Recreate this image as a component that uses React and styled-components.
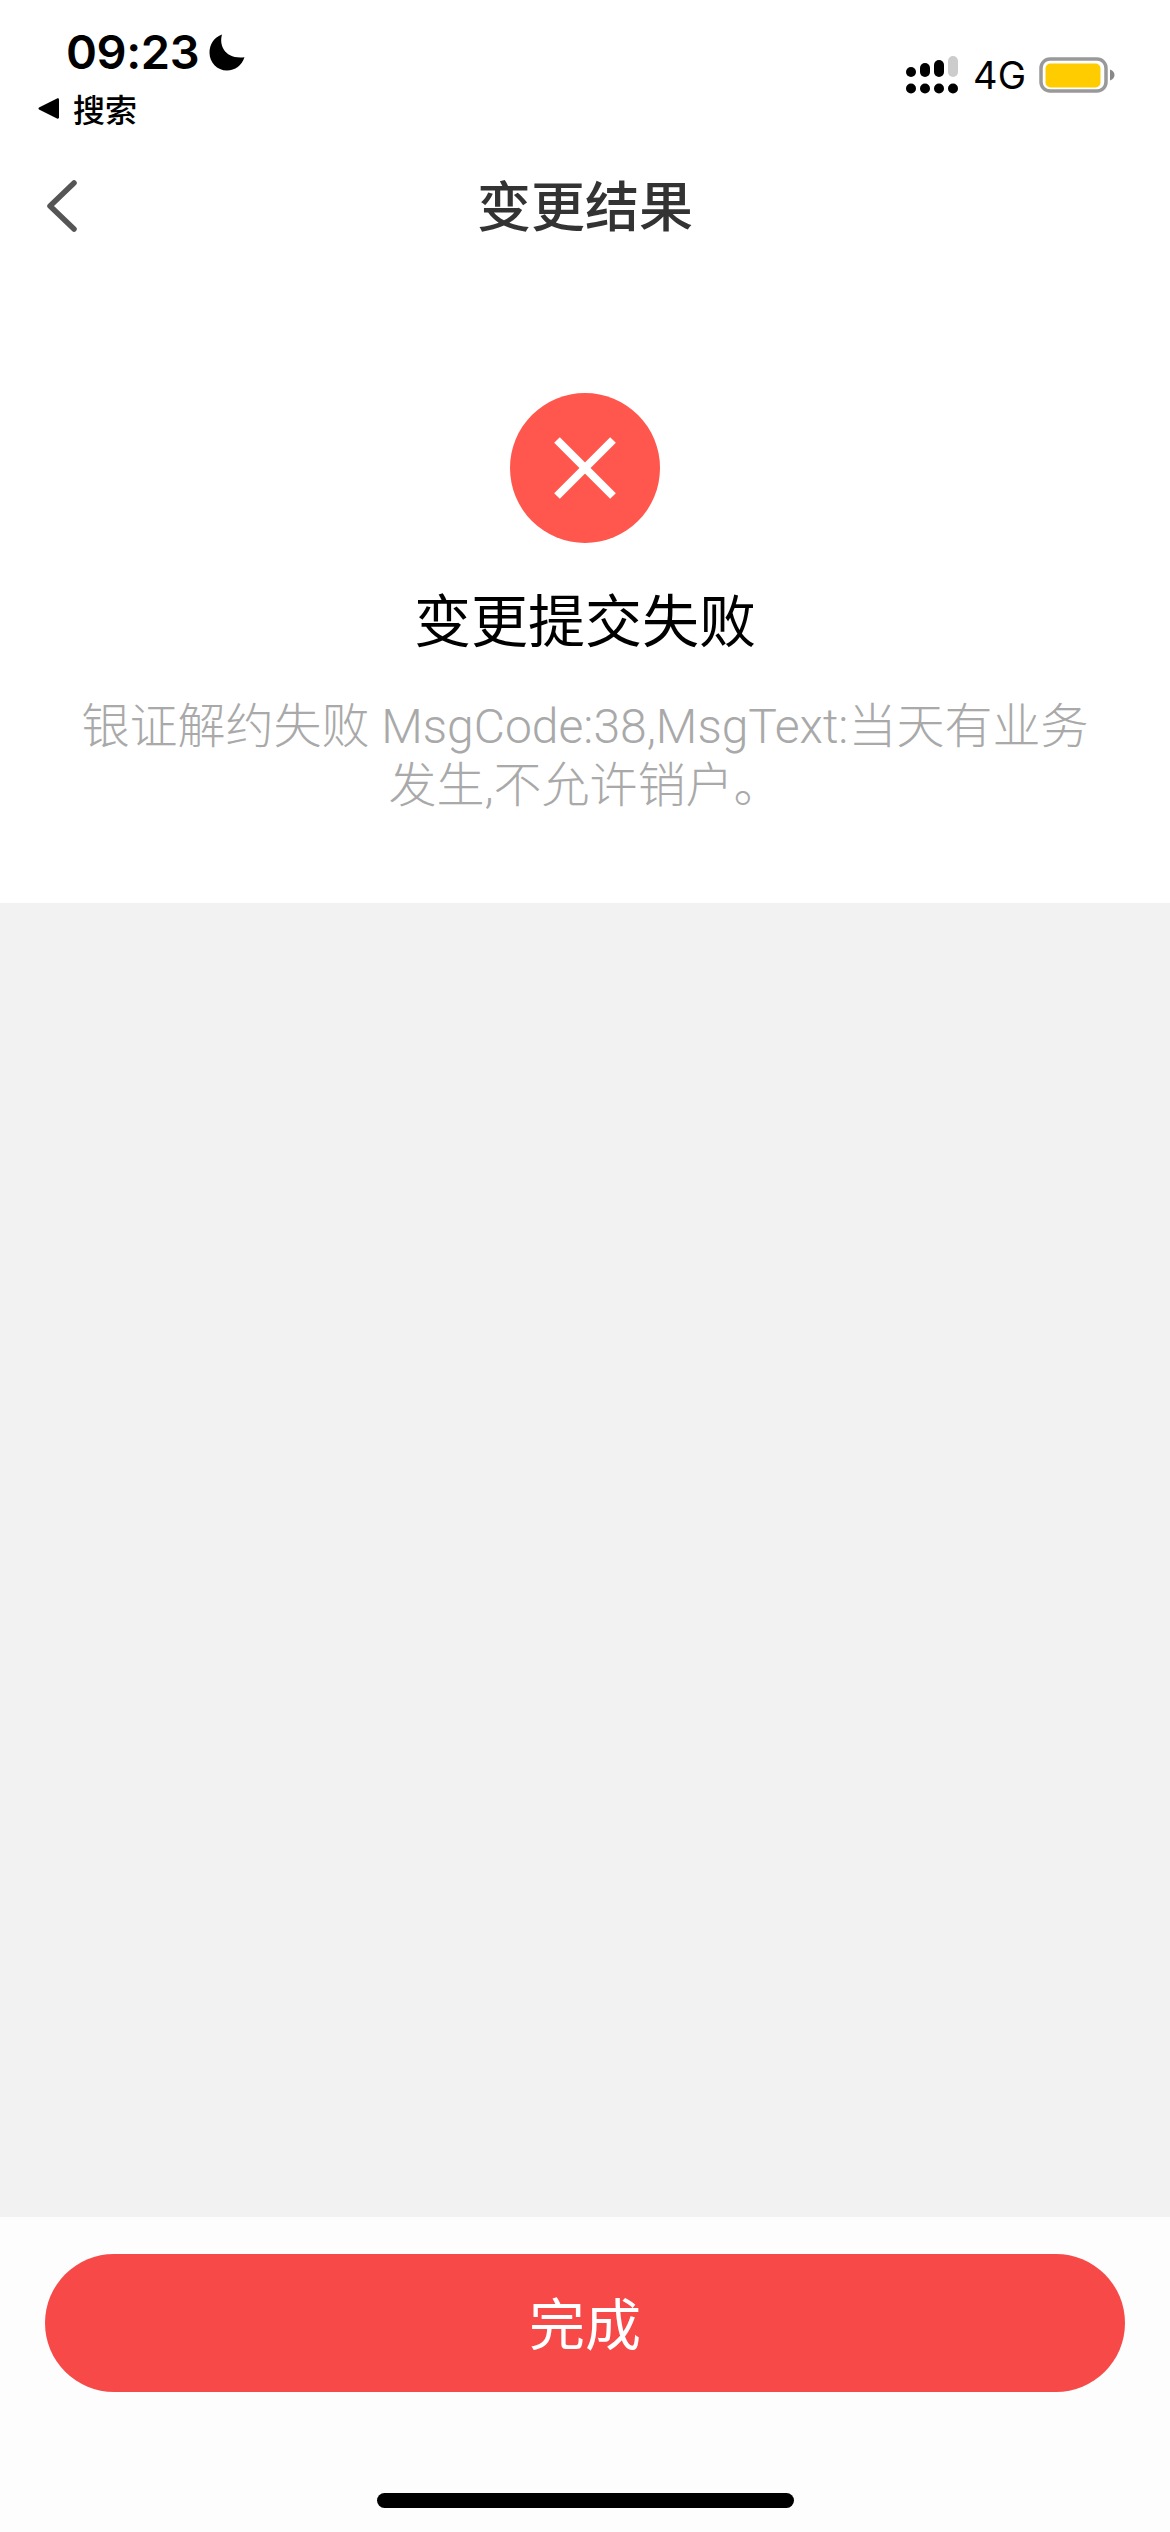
import React from 'react';
import styled, { createGlobalStyle } from 'styled-components';

const cjk = `"Noto Sans CJK SC", "Noto Sans", sans-serif`;

const GlobalStyle = createGlobalStyle`
  html, body {
    margin: 0;
    padding: 0;
    background: #fff;
  }
  * {
    box-sizing: border-box;
  }
`;

const Page = styled.div`
  width: 1170px;
  height: 2532px;
  display: flex;
  flex-direction: column;
  background: #fff;
  overflow: hidden;
`;

const StatusBar = styled.div`
  height: 134px;
  display: flex;
  justify-content: space-between;
  align-items: flex-start;
`;

const StatusLeft = styled.div`
  display: flex;
  flex-direction: column;
  padding: 26px 0 0 38px;
`;

const TimeRow = styled.div`
  display: flex;
  align-items: center;
  gap: 10px;
  height: 52px;
  padding-left: 28px;
`;

const Time = styled.span`
  font-family: "Inter", "Liberation Sans", sans-serif;
  font-size: 47px;
  font-weight: 600;
  line-height: 52px;
  letter-spacing: -0.4px;
  color: #000;
`;

const BackLink = styled.div`
  display: flex;
  align-items: center;
  gap: 13px;
  height: 40px;
  margin-top: 10px;
`;

const BackLabel = styled.span`
  font-family: ${cjk};
  font-size: 32px;
  font-weight: 500;
  line-height: 40px;
  color: #000;
`;

const StatusRight = styled.div`
  display: flex;
  align-items: center;
  gap: 15px;
  padding: 56px 55px 0 0;
`;

const Network = styled.span`
  margin-right: -2px;
  font-family: "Inter", "Liberation Sans", sans-serif;
  font-size: 38px;
  font-weight: 400;
  line-height: 36px;
  color: #000;
`;

const Nav = styled.div`
  height: 144px;
  display: grid;
  grid-template-columns: 1fr auto 1fr;
  align-items: center;
  padding: 0 47px;
`;

const BackButton = styled.div`
  display: flex;
  align-items: center;
`;

const NavTitle = styled.div`
  font-family: ${cjk};
  font-size: 54px;
  font-weight: 500;
  color: #333;
  line-height: 70px;
  margin-top: -5px;
`;

const Result = styled.div`
  height: 625px;
  display: flex;
  flex-direction: column;
  align-items: center;
  padding-top: 115px;
`;

const FailIcon = styled.div`
  width: 150px;
  height: 150px;
  border-radius: 50%;
  background: #ff574d;
  display: flex;
  align-items: center;
  justify-content: center;
`;

const ResultTitle = styled.div`
  margin-top: 34px;
  font-family: ${cjk};
  font-size: 57px;
  font-weight: 400;
  line-height: 80px;
  color: #000;
`;

const ResultMessage = styled.div`
  margin-top: 40px;
  width: 1040px;
  text-align: center;
  font-family: "Roboto", ${cjk};
  font-size: 48px;
  font-weight: 300;
  line-height: 59px;
  color: #a9a9a9;
`;

const Spacer = styled.div`
  flex: 1;
  background: #f2f2f2;
`;

const Footer = styled.div`
  height: 315px;
  display: flex;
  flex-direction: column;
  align-items: center;
  padding-top: 37px;
  background: #fdfdfd;
`;

const DoneButton = styled.button`
  width: 1080px;
  height: 138px;
  padding: 0 0 6px;
  border: 0;
  border-radius: 69px;
  background: #f84949;
  color: #fff;
  font-family: ${cjk};
  font-size: 56px;
  font-weight: 400;
`;

const HomeBar = styled.div`
  width: 417px;
  height: 15px;
  margin-top: 101px;
  border-radius: 8px;
  background: #000;
`;

const Moon = () => (
  <svg width="36" height="37" viewBox="0 0 36 37">
    <path
      d="M13 0.5C9.8 11.5 16 25.5 35.5 23.2C33 31.2 26 36.5 18 36.5C8 36.5 0.5 28.5 0.5 18.5C0.5 10 5.5 3 13 0.5Z"
      fill="#000"
    />
  </svg>
);

const BackTriangle = () => (
  <svg width="22" height="21" viewBox="0 0 22 21">
    <path d="M21 1.5V19.5C21 20.5 20 21 19 20.5L1 11.5C0.3 11 0.3 10 1 9.5L19 0.5C20 0 21 0.5 21 1.5Z" fill="#000" />
  </svg>
);

const Signal = () => (
  <svg width="52" height="38" viewBox="0 0 52 38">
    <rect x="0" y="11" width="10" height="10" rx="5" fill="#000" />
    <rect x="14" y="7" width="10" height="14" rx="5" fill="#000" />
    <rect x="28" y="4" width="10" height="17" rx="5" fill="#000" />
    <rect x="42" y="0" width="10" height="21" rx="5" fill="#ccc" />
    <circle cx="5" cy="32.5" r="5" fill="#000" />
    <circle cx="19" cy="32.5" r="5" fill="#000" />
    <circle cx="33" cy="32.5" r="5" fill="#000" />
    <circle cx="47" cy="32.5" r="5" fill="#000" />
  </svg>
);

const Battery = () => (
  <svg width="76" height="36" viewBox="0 0 76 36">
    <rect x="2" y="2" width="65" height="32" rx="9" fill="none" stroke="#999" strokeWidth="3.5" />
    <rect x="6.5" y="6.5" width="55" height="24" rx="5" fill="#fc0" />
    <path d="M71 12.5C74 13.5 75.5 15.5 75.5 18C75.5 20.5 74 22.5 71 23.5Z" fill="#888" />
  </svg>
);

const Chevron = () => (
  <svg width="30" height="52" viewBox="0 0 30 52">
    <path d="M27 3L3 26L27 49" fill="none" stroke="#555" strokeWidth="5.5" strokeLinecap="round" strokeLinejoin="round" />
  </svg>
);

const Cross = () => (
  <svg width="62" height="62" viewBox="0 0 62 62">
    <path d="M3 3L59 59M59 3L3 59" fill="none" stroke="#fff" strokeWidth="8" />
  </svg>
);

function App() {
  return (
    <Page>
      <GlobalStyle />
      <StatusBar>
        <StatusLeft>
          <TimeRow>
            <Time>09:23</Time>
            <Moon />
          </TimeRow>
          <BackLink>
            <BackTriangle />
            <BackLabel>搜索</BackLabel>
          </BackLink>
        </StatusLeft>
        <StatusRight>
          <Signal />
          <Network>4G</Network>
          <Battery />
        </StatusRight>
      </StatusBar>
      <Nav>
        <BackButton>
          <Chevron />
        </BackButton>
        <NavTitle>变更结果</NavTitle>
      </Nav>
      <Result>
        <FailIcon>
          <Cross />
        </FailIcon>
        <ResultTitle>变更提交失败</ResultTitle>
        <ResultMessage>银证解约失败 MsgCode:38,MsgText:当天有业务发生,不允许销户。</ResultMessage>
      </Result>
      <Spacer />
      <Footer>
        <DoneButton>完成</DoneButton>
        <HomeBar />
      </Footer>
    </Page>
  );
}

export default App;
